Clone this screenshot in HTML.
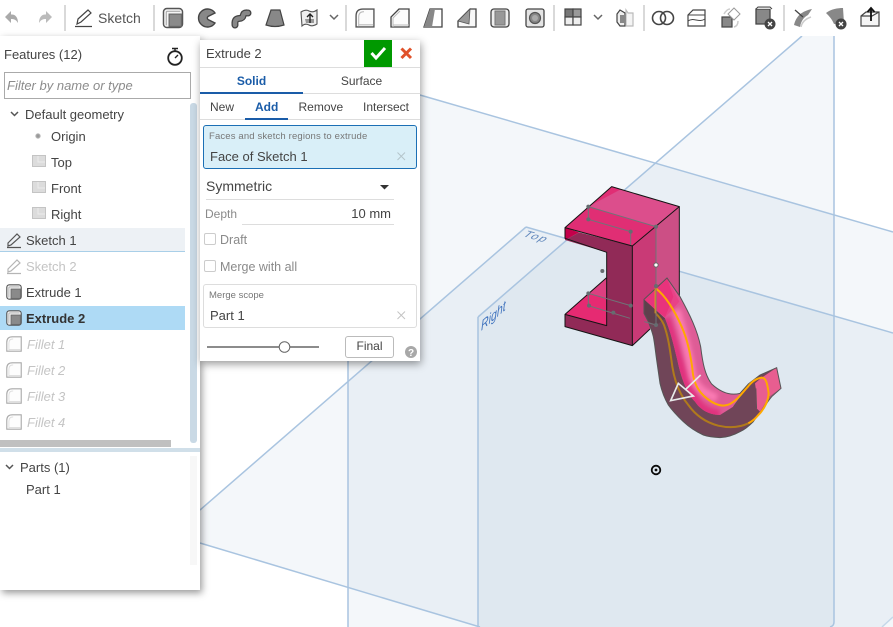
<!DOCTYPE html>
<html><head><meta charset="utf-8"><style>
html,body{margin:0;padding:0;width:893px;height:627px;overflow:hidden;background:#fff;font-family:"Liberation Sans",sans-serif;font-size:13px;color:#444}
svg{position:absolute;left:0;top:0;overflow:hidden}
.t{position:absolute;height:20px;line-height:20px;white-space:nowrap;margin-top:1px}
.b{position:absolute}
#panel{position:absolute;left:0;top:36px;width:200px;height:554px;background:#fff;box-shadow:2px 3px 7px rgba(0,0,0,.4)}
#dlg{position:absolute;left:200px;top:40px;width:220px;height:321px;background:#fff;box-shadow:1px 3px 8px rgba(0,0,0,.4)}
.g{color:#c4c4c4}.i{font-style:italic}.m{color:#8a8a8a}
</style></head><body>
<svg width="893" height="627" viewBox="0 0 893 627">
 <defs>
  <filter id="bl" x="-20%" y="-20%" width="140%" height="140%"><feGaussianBlur stdDeviation="7"/></filter>
  <clipPath id="band"><path d="M75,115 L47,90 L12,58 L81,-6 L120,50 C150,105 172,150 182,200 C188,250 195,285 215,312 C240,335 270,348 300,340 L325,318 L280,380 L240,405 C215,405 185,395 165,365 C140,340 122,290 112,240 C100,190 90,150 75,115 Z"/></clipPath>
 </defs>
 <g fill="#4f7cae" fill-opacity=".062">
  <polygon points="348,74 893,232 893,627 348,627"/>
  <polygon points="478,317 802,36 834,36 834,623 830,627 478,627"/>
  <polygon points="526,227 893,333 893,617 882,627 480,627 171,535"/>
 </g>
 <g fill="none" stroke="#a9c4e0" stroke-width="1.5">
  <path d="M420,95 L893,232"/>
  <path d="M348,300 V627"/>
  <path d="M834,36 V622 Q834,626 830,627"/>
  <path d="M478,317 V627"/>
  <path d="M802,36 L478,317"/>
  <path d="M526,227 L893,333"/>
  <path d="M526,227 L200,510"/>
  <path d="M200,543 L480,627"/>
  <path d="M893,617 L882,627" stroke-opacity=".6"/>
 </g>
 <text transform="matrix(.96,.277,-.756,.655,522,236)" font-size="12" fill="#5f86bb" letter-spacing="1.5" font-family="Liberation Sans">Top</text>
 <text transform="matrix(.756,-.655,0,1,481,331)" font-size="14" fill="#3f72bd" font-style="italic" font-family="Liberation Sans">Right</text>

 <!-- block: zoom coordinates -->
 <g transform="translate(550,175) scale(.33333)">
  <polygon points="45,158 185,35 388,95 247,213" fill="#dc4e8c"/>
  <polygon points="45,158 185,35 212,43 115,95 318,155 247,213" fill="#e02e74"/>
  <polygon points="45,158 88,172 45,195" fill="#c4004a"/>
  <polygon points="247,213 388,95 388,375 247,512" fill="#cc4f85"/>
  <polygon points="247,213 318,155 318,445 247,512" fill="#c93a76"/>
  <polygon points="45,418 170,308 170,452" fill="#e62a72"/>
  <polygon points="115,355 170,308 170,372" fill="#dc3f80"/>
  <polygon points="88,172 247,213 247,512 45,455 45,418 170,452 170,232 45,195" fill="#912a57"/>
  <g fill="none" stroke="#141414" stroke-width="3" stroke-linejoin="round">
   <polygon points="45,158 185,35 388,95 247,213"/>
   <path d="M388,95 V375 M247,213 V512 L300,462"/>
   <path d="M45,158 V190 L170,232 V452 L45,418 L170,308 M45,418 V455 L247,512"/>
  </g>
 </g>

 <!-- hook: zoom coordinates -->
 <g transform="translate(640,280) scale(.33333)">
  <path id="sil" d="M12,58 L81,-6 L120,50 C150,105 172,150 182,200 C188,250 195,285 215,312 C240,335 270,348 300,340 L325,312 L360,285 L410,263 L423,325 L395,350 C385,362 378,373 370,385 C355,405 345,417 340,425 C325,440 312,450 300,455 C280,466 260,472 240,473 C222,472 205,470 190,465 C168,455 148,442 130,425 C112,408 97,392 85,375 C72,352 65,332 60,310 L50,240 C46,212 44,190 40,170 C35,150 30,138 25,125 L12,100 Z" fill="#704558"/>
  <path d="M75,115 L47,90 L12,58 L81,-6 L120,50 C150,105 172,150 182,200 C188,250 195,285 215,312 C240,335 270,348 300,340 L325,318 L280,380 L240,405 C215,405 185,395 165,365 C140,340 122,290 112,240 C100,190 90,150 75,115 Z" fill="#de5c96"/>
  <g clip-path="url(#band)">
   <path d="M75,115 C100,190 122,290 165,365 C185,395 215,405 240,405" fill="none" stroke="#e0307e" stroke-width="34" filter="url(#bl)"/>
   <path d="M110,90 C135,170 150,240 158,290 C170,325 195,340 230,355" fill="none" stroke="#fb7cb4" stroke-width="24" filter="url(#bl)"/>
  </g>
  <polygon points="12,58 81,-6 118,65 75,112 47,90" fill="#e8337c"/>
  <polygon points="81,-6 118,50 122,72 75,112 100,50" fill="#e84f8f" fill-opacity=".55"/>
  <polygon points="12,58 47,90 75,115 50,135 25,125 12,100" fill="#5f3f4c"/>
  <polygon points="345,310 365,293 410,263 423,325 388,350 360,395 350,385 348,330" fill="#e85e90"/>
  <polygon points="388,350 423,325 395,350 370,385 360,395" fill="#a85a7c"/>
  <path d="M12,58 L81,-6 L120,50 C150,105 172,150 182,200 C188,250 195,285 215,312 C240,335 270,348 300,340 L325,312 L360,285 L410,263 L423,325 L395,350 C385,362 378,373 370,385 C355,405 345,417 340,425 C325,440 312,450 300,455 C280,466 260,472 240,473 C222,472 205,470 190,465 C168,455 148,442 130,425 C112,408 97,392 85,375 C72,352 65,332 60,310 L50,240 C46,212 44,190 40,170 C35,150 30,138 25,125 L12,100 Z" fill="none" stroke="#555" stroke-width="3"/>
  <path d="M325,318 L280,380 M348,325 L350,385" fill="none" stroke="#555" stroke-width="2"/>
  <path d="M47,25 C80,50 105,95 125,140 C145,185 152,230 157,265 C160,310 175,335 200,355 C225,375 250,382 270,372 C295,358 305,340 322,322 C335,305 350,295 365,293 C378,293 382,310 386,340 C385,360 375,385 355,405 C345,417 335,425 325,430" fill="none" stroke="#ffa800" stroke-width="6"/>
  <path d="M325,430 C300,442 270,445 235,437 C200,428 170,410 145,375 C120,345 105,310 97,260 C90,210 85,170 72,135 C65,118 55,108 47,100" fill="none" stroke="#b07a1c" stroke-width="6"/>
  <path d="M47,25 V100" stroke="#ffa800" stroke-width="6" fill="none"/>
  <path d="M182,285 L135,330 M115,310 L160,348 L92,362 Z" fill="none" stroke="#e8eaea" stroke-width="5"/>
 </g>

 <!-- sketch overlay -->
 <g transform="translate(550,175) scale(.33333)">
  <g stroke="#6f7478" stroke-width="3" fill="none">
   <path d="M115,95 L318,155 V450 M115,95 V133 L242,170 V210"/>
   <path d="M115,355 L242,392 M115,355 V392 L240,430 M283,440 L318,450"/>
  </g>
  <g fill="#666c70">
   <circle cx="115" cy="95" r="6"/><circle cx="115" cy="133" r="6"/><circle cx="242" cy="170" r="6"/><circle cx="318" cy="155" r="6"/>
   <circle cx="157" cy="288" r="6"/><circle cx="115" cy="355" r="6"/><circle cx="117" cy="392" r="6"/><circle cx="242" cy="392" r="6"/><circle cx="190" cy="413" r="6"/><circle cx="318" cy="333" r="6"/><circle cx="318" cy="450" r="6"/>
  </g>
  <circle cx="318" cy="270" r="6.500" fill="#fff" stroke="#666" stroke-width="3"/>
 </g>
 <circle cx="656" cy="470" r="4.300" fill="none" stroke="#0a0a0a" stroke-width="1.800"/><circle cx="656" cy="470" r="1.400" fill="#0a0a0a"/>
</svg>

<div class="b" style="left:0;top:0;width:893px;height:36px;background:#fff"></div>

<div id="panel"></div>
<div class="b" style="left:190px;top:103px;width:7px;height:340px;background:#c9d9e5;border-radius:3px"></div>
<div class="b" style="left:0;top:228px;width:185px;height:23px;background:#edf1f5;border-bottom:1px solid #a9cfe8"></div>
<div class="b" style="left:0;top:306px;width:185px;height:24px;background:#aedaf5"></div>
<div class="b" style="left:0;top:440px;width:171px;height:7px;background:#c0c0c0"></div>
<div class="b" style="left:0;top:448px;width:200px;height:4px;background:#d0dfe9"></div>
<div class="b" style="left:190px;top:456px;width:7px;height:109px;background:#f7f7f7"></div>
<div class="b" style="left:4px;top:72px;width:185px;height:25px;border:1px solid #aaa"></div>

<div class="t" style="left:4px;top:44px">Features (12)</div>
<div class="t i" style="left:7px;top:75px;color:#8c8c8c">Filter by name or type</div>
<div class="t" style="left:25px;top:104px">Default geometry</div>
<div class="t" style="left:51px;top:126px">Origin</div>
<div class="t" style="left:51px;top:152px">Top</div>
<div class="t" style="left:51px;top:178px">Front</div>
<div class="t" style="left:51px;top:204px">Right</div>
<div class="t" style="left:26px;top:230px">Sketch 1</div>
<div class="t g" style="left:26px;top:256px">Sketch 2</div>
<div class="t" style="left:26px;top:282px">Extrude 1</div>
<div class="t" style="left:26px;top:308px;font-weight:bold;color:#333">Extrude 2</div>
<div class="t g i" style="left:27px;top:334px">Fillet 1</div>
<div class="t g i" style="left:27px;top:360px">Fillet 2</div>
<div class="t g i" style="left:27px;top:386px">Fillet 3</div>
<div class="t g i" style="left:27px;top:412px">Fillet 4</div>
<div class="t" style="left:20px;top:457px">Parts (1)</div>
<div class="t" style="left:26px;top:479px">Part 1</div>

<div id="dlg"></div>
<div class="b" style="left:364px;top:40px;width:28px;height:27px;background:#009900"></div>
<div class="b" style="left:200px;top:67px;width:220px;height:1px;background:#ddd"></div>
<div class="b" style="left:200px;top:93px;width:220px;height:1px;background:#ddd"></div>
<div class="b" style="left:200px;top:92px;width:103px;height:2px;background:#1a5ca8"></div>
<div class="b" style="left:200px;top:119px;width:220px;height:1px;background:#ddd"></div>
<div class="b" style="left:245px;top:118px;width:43px;height:2px;background:#1a5ca8"></div>
<div class="b" style="left:203px;top:125px;width:212px;height:42px;background:#d9eff8;border:1px solid #1b6fb5;border-radius:3px"></div>
<div class="b" style="left:206px;top:199px;width:188px;height:1px;background:#ddd"></div>
<div class="b" style="left:242px;top:224px;width:152px;height:1px;background:#ddd"></div>
<div class="b" style="left:204px;top:233px;width:10px;height:10px;border:1px solid #ccc;border-radius:2px"></div>
<div class="b" style="left:204px;top:260px;width:10px;height:10px;border:1px solid #ccc;border-radius:2px"></div>
<div class="b" style="left:203px;top:284px;width:212px;height:42px;border:1px solid #ddd;border-radius:3px"></div>
<div class="b" style="left:345px;top:336px;width:47px;height:20px;border:1px solid #bbb;border-radius:3px"></div>

<div class="t" style="left:206px;top:43px;font-size:13px">Extrude 2</div>
<div class="t" style="left:200px;top:70px;width:103px;text-align:center;color:#1a5ca8;font-weight:bold;font-size:12px">Solid</div>
<div class="t" style="left:303px;top:70px;width:117px;text-align:center;font-size:12px">Surface</div>
<div class="t" style="left:210px;top:96px;font-size:12px">New</div>
<div class="t" style="left:255px;top:96px;font-size:12px;color:#1a5ca8;font-weight:bold">Add</div>
<div class="t" style="left:298.500px;top:96px;font-size:12px">Remove</div>
<div class="t" style="left:363px;top:96px;font-size:12px">Intersect</div>
<div class="t" style="left:209px;top:126px;font-size:9.500px;color:#777;letter-spacing:.15px">Faces and sketch regions to extrude</div>
<div class="t" style="left:210px;top:146px">Face of Sketch 1</div>
<div class="t" style="left:206px;top:175px;font-size:14px">Symmetric</div>
<div class="t m" style="left:205px;top:203px;font-size:12px">Depth</div>
<div class="t" style="left:300px;top:203px;width:91px;text-align:right">10 mm</div>
<div class="t m" style="left:220px;top:229px;font-size:12.500px">Draft</div>
<div class="t m" style="left:220px;top:256px;font-size:12.500px">Merge with all</div>
<div class="t" style="left:209px;top:285px;font-size:9.500px;color:#777">Merge scope</div>
<div class="t" style="left:210px;top:305px">Part 1</div>
<div class="t" style="left:345px;top:335px;width:49px;text-align:center;font-size:12px">Final</div>
<div class="t" style="left:98px;top:7px;font-size:14px;color:#555">Sketch</div>

<svg width="893" height="627" viewBox="0 0 893 627" style="pointer-events:none">
 <defs>
  <g id="ext">
   <rect x="-8.500" y="-8.500" width="17" height="17" rx="3" fill="#f4f4f4" stroke="#555" stroke-width="1.300"/>
   <path d="M-6,6.500 V-5 Q-6,-6 -5,-6 H6.500" fill="none" stroke="#aaa" stroke-width="1"/>
   <rect x="-3.500" y="-3.500" width="11" height="11" fill="#8a8a8a" stroke="#666" stroke-width="1"/>
  </g>
  <g id="fil">
   <path d="M-8.500,8.500 H8.500 V-8.500 H-2 Q-8.500,-8.500 -8.500,-2 Z" fill="#fcfcfc" stroke="#555" stroke-width="1.300"/>
   <path d="M-6,8 V-1 Q-6,-6 -1,-6 M-6,6.500 H8" fill="none" stroke="#bbb"/>
  </g>
  <g id="pln">
   <path d="M-6.500,-5.500 H6.500 V5.500 H-6.500 Z" fill="#dcdcdc" stroke="#c4c4c4"/><path d="M-1,-5 V1 H6" fill="none" stroke="#ececec"/>
  </g>
  <g id="pen">
   <path d="M-6,3 L3,-6 L6,-3 L-3,5 L-6,6 Z M-7,7.500 H7" fill="none" stroke="currentColor" stroke-width="1.200"/>
  </g>
 </defs>
 <!-- toolbar separators -->
 <g fill="#d9d9d9">
  <rect x="64" y="5" width="2" height="26"/><rect x="153" y="5" width="2" height="26"/><rect x="345" y="5" width="2" height="26"/>
  <rect x="553" y="5" width="2" height="26"/><rect x="643" y="5" width="2" height="26"/><rect x="783" y="5" width="2" height="26"/>
 </g>
 <path d="M5,17 L11,11 V14.500 C15,14 18,17 18,23 C16,19.500 14,19 11,19 V23 Z" fill="#aaa"/>
 <path d="M52,17 L46,11 V14.500 C42,14 39,17 39,23 C41,19.500 43,19 46,19 V23 Z" fill="#bbb"/>
 <path d="M77,24 L78,19 L88,10 L91,13 L81,22 Z M75,26.500 H92" fill="none" stroke="#444" stroke-width="1.200"/>
 <use href="#ext" transform="translate(173,18) scale(1.120)"/>
 <g transform="translate(207,18)"><path d="M8,-5 A9,9 0 1 0 8,5 L1,1.500 A2,2 0 0 1 1,-1.500 Z" fill="#888" stroke="#444" stroke-width="1.400"/></g>
 <g transform="translate(241,18)" fill="none" stroke-linecap="round"><path d="M-6,7 C-7,-3 1,3 2,-2 C3,-6 5,-5 7,-5" stroke="#444" stroke-width="7"/><path d="M-6,7 C-7,-3 1,3 2,-2 C3,-6 5,-5 7,-5" stroke="#888" stroke-width="4.400"/></g>
 <path d="M271,10 H280 L284,25 Q275,28 266,25 Z" fill="#888" stroke="#444" stroke-width="1.200"/>
 <g transform="translate(309,18)"><path d="M-8,-6 Q-3,-9 0,-7 Q4,-5 8,-8 V6 Q3,9 0,7 Q-4,5 -7,8 Z" fill="#eee" stroke="#555" stroke-width="1.100"/><path d="M-4,1 H5 V5 H-3 Z" fill="#999"/><path d="M1,5 V-3 M-2,-1 L1,-4 L4,-1" fill="none" stroke="#222" stroke-width="1.400"/></g>
 <path d="M330,15 L334,19 L338,15" fill="none" stroke="#666" stroke-width="1.500"/>
 <use href="#fil" transform="translate(365,18) scale(1.050)"/>
 <g transform="translate(400,18)"><path d="M-9,9 H9 V-9 H-1 L-9,-1 Z" fill="#fcfcfc" stroke="#444" stroke-width="1.300"/><path d="M-7,9 V0 L0,-7 M-7,7 H9" fill="none" stroke="#bbb"/></g>
 <g transform="translate(433,18)"><path d="M-9,9 L-3,-9 H9 V9 Z" fill="#fff" stroke="#444" stroke-width="1.300"/><path d="M-9,9 L-3,-9 H2 L-1,9 Z" fill="#888"/></g>
 <g transform="translate(467,18)"><path d="M-9,9 V3 L3,-9 H9 V9 Z" fill="#f8f8f8" stroke="#444" stroke-width="1.300"/><path d="M-9,3 L2,6 L3,-9 Z" fill="#999" stroke="#555" stroke-width=".8"/></g>
 <g transform="translate(500,18)"><rect x="-9" y="-9" width="18" height="18" rx="3" fill="#eee" stroke="#444" stroke-width="1.300"/><rect x="-5" y="-7" width="10" height="14" fill="#999" stroke="#777"/></g>
 <g transform="translate(535,18)"><rect x="-9" y="-9" width="18" height="18" rx="2" fill="#e4e4e4" stroke="#444" stroke-width="1.300"/><circle r="5.500" fill="#888" stroke="#555" stroke-width="1.200"/><circle r="3" fill="#aaa"/></g>
 <g transform="translate(573,17)" stroke="#444" stroke-width="1.200"><rect x="-8" y="-8" width="8" height="8" fill="#777"/><rect x="0" y="-8" width="8" height="8" fill="#999"/><rect x="-8" y="0" width="8" height="8" fill="#eee"/><rect x="0" y="0" width="8" height="8" fill="#eee"/></g>
 <path d="M594,15 L598,19 L602,15" fill="none" stroke="#666" stroke-width="1.500"/>
 <g transform="translate(625,18)"><path d="M-8,-4 L-5,-8 L0,-5 V8 H-5 L-8,4 Z" fill="#eee" stroke="#444" stroke-width="1.200"/><path d="M1,-8 L3,-5 H8 V8 H1 Z" fill="#f4f4f4" stroke="#bbb" stroke-width="1.200"/><rect x="-5" y="-3" width="4" height="8" fill="#888"/></g>
 <g fill="none" stroke="#444" stroke-width="1.600"><circle cx="659" cy="18" r="6.500"/><circle cx="667" cy="18" r="6.500"/></g>
 <g transform="translate(697,18)"><path d="M-9,-3 L-4,-8 H8 V8 H-9 Z" fill="#fff" stroke="#444" stroke-width="1.200"/><path d="M-9,-3 H8 M-9,3 C-4,-1 2,5 8,1" fill="none" stroke="#444"/></g>
 <g transform="translate(730,18)"><rect x="-8" y="-1" width="10" height="10" fill="#888" stroke="#444" stroke-width="1.200"/><path d="M4,-10 L10,-4 L4,2 L-2,-4 Z" fill="#fff" stroke="#999"/><path d="M-6,-4 Q-3,-9 0,-9 M8,3 Q8,8 4,9" fill="none" stroke="#ccc" stroke-width="1.500"/></g>
 <g transform="translate(763,16)"><path d="M-7,-7 H7 V8 H-7 Z" fill="#888" stroke="#444" stroke-width="1.300"/><path d="M-7,-7 L-5,-9 H7 L9,-7" fill="#ddd" stroke="#444"/><circle cx="7" cy="8" r="5.500" fill="#444"/><path d="M5,6 L9,10 M9,6 L5,10" stroke="#fff" stroke-width="1.300"/></g>
 <g transform="translate(803,18)"><path d="M-9,7 C-7,-2 -1,-7 9,-9 L5,-3 C1,-1 -2,3 -3,9 Z" fill="#888"/><path d="M-2,9 C-1,4 2,1 8,-1" stroke="#ccc" fill="none" stroke-width="1.500"/><path d="M-8,-8 L0,-1" stroke="#444" stroke-width="1.300"/></g>
 <g transform="translate(835,16)"><path d="M-9,-3 C-4,-7 3,-8 8,-8 L9,7 L-1,8 C-3,3 -6,0 -9,-3 Z" fill="#888"/><circle cx="6" cy="8" r="5.500" fill="#444"/><path d="M4,6 L8,10 M8,6 L4,10" stroke="#fff" stroke-width="1.300"/></g>
 <g transform="translate(870,18)"><path d="M-9,-2 L-4,-6 H9 V8 H-9 Z M-9,-2 H2 L9,-6" fill="#f5f5f5" stroke="#444" stroke-width="1.200"/><path d="M1,3 V-9 M-2.500,-6 L1,-10 L4.500,-6" fill="none" stroke="#111" stroke-width="1.800"/></g>

 <!-- stopwatch -->
 <g fill="none" stroke="#222"><circle cx="175" cy="58" r="6.800" stroke-width="1.800"/><path d="M172,48.500 H178 M175,49 V51 M175,58 L178,55" stroke-width="1.400"/></g>
 <!-- tree icons -->
 <path d="M11,112 L14.500,115.500 L18,112" fill="none" stroke="#555" stroke-width="1.500"/>
 <path d="M6,465 L9.500,468.500 L13,465" fill="none" stroke="#555" stroke-width="1.500"/>
 <circle cx="38" cy="136" r="2.200" fill="#999" stroke="#bbb"/>
 <use href="#pln" transform="translate(39,161)"/>
 <use href="#pln" transform="translate(39,187)"/>
 <use href="#pln" transform="translate(39,213)"/>
 <use href="#pen" transform="translate(14,240)" color="#555"/>
 <use href="#pen" transform="translate(14,266)" color="#b5b5b5"/>
 <use href="#ext" transform="translate(14,292) scale(.85)"/>
 <use href="#ext" transform="translate(14,318) scale(.85)"/>
 <g opacity=".5">
  <use href="#fil" transform="translate(14,344) scale(.85)"/>
  <use href="#fil" transform="translate(14,370) scale(.85)"/>
  <use href="#fil" transform="translate(14,396) scale(.85)"/>
  <use href="#fil" transform="translate(14,422) scale(.85)"/>
 </g>
 <!-- dialog icons -->
 <path d="M371.500,53 L376,58 L385,48" fill="none" stroke="#fff" stroke-width="3"/>
 <path d="M401.500,48.500 L411,58 M411,48.500 L401.500,58" stroke="#e0522a" stroke-width="3" fill="none"/>
 <path d="M397.500,152.500 L405,160 M405,152.500 L397.500,160" stroke="#b5c5cc" stroke-width="1"/>
 <path d="M397.500,311.500 L405,319 M405,311.500 L397.500,319" stroke="#c4c4c4" stroke-width="1"/>
 <path d="M380,185 H389 L384.500,189.500 Z" fill="#333"/>
 <path d="M207,347 H319" stroke="#666" stroke-width="1.400"/>
 <circle cx="284.500" cy="347" r="5.300" fill="#fff" stroke="#666" stroke-width="1"/>
 <circle cx="411" cy="352" r="6" fill="#a8a8a8"/>
 <text x="411" y="356" text-anchor="middle" font-size="10" font-weight="bold" fill="#fff" font-family="Liberation Sans">?</text>
</svg>
</body></html>
